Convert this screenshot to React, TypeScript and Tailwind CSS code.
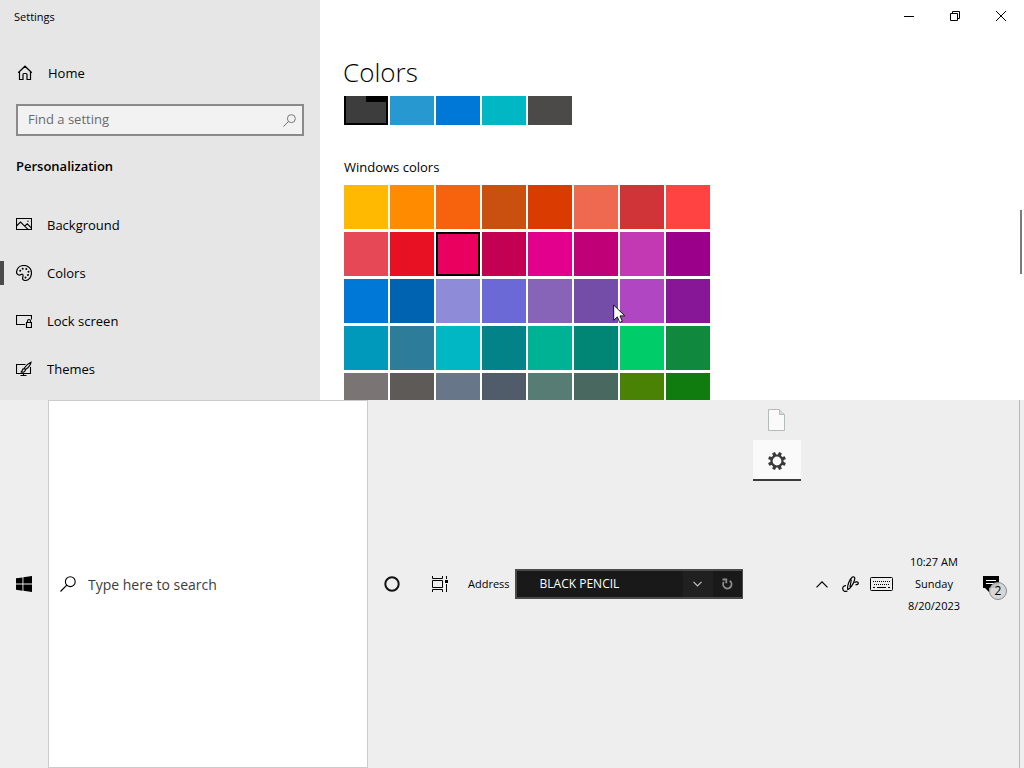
import type { ReactNode } from "react";

const recentColors = [
  { name: "Light blue", hex: "#2899d0" },
  { name: "Default blue", hex: "#0078d7" },
  { name: "Seafoam", hex: "#00b7c3" },
  { name: "Dark gray", hex: "#4c4a48" },
];

const windowsColors: string[] = [
  "#ffb900", "#ff8c00", "#f7630c", "#ca5010", "#da3b01", "#ef6950", "#d13438", "#ff4343",
  "#e74856", "#e81123", "#ea005e", "#c30052", "#e3008c", "#bf0077", "#c239b3", "#9a0089",
  "#0078d7", "#0063b1", "#8e8cd8", "#6b69d6", "#8764b8", "#744da9", "#b146c2", "#881798",
  "#0099bc", "#2d7d9a", "#00b7c3", "#038387", "#00b294", "#018574", "#00cc6a", "#10893e",
  "#7a7574", "#5d5a58", "#68768a", "#515c6b", "#567c73", "#486860", "#498205", "#107c10",
];

const selectedIndex = 10;
const pointerIndex = 21;

function Icon({ size = 16, children }: { size?: number; children: ReactNode }) {
  return (
    <svg width={size} height={size} viewBox="0 0 16 16" fill="none" stroke="currentColor" aria-hidden="true" className="shrink-0">
      {children}
    </svg>
  );
}

const HomeIcon = () => (
  <Icon>
    <path d="M1.200 7.800 8 1.200l6.800 6.600M2.500 6.800v7.700h3.500V9.500a1 1 0 0 1 1-1h2a1 1 0 0 1 1 1v5h3.500V6.800" strokeWidth="1.200" />
  </Icon>
);

const PictureIcon = () => (
  <Icon>
    <path d="M.5 1.500h15v11H.5zM1 8.500l3.500-3.500 7.500 7.300M8.800 9l2.500-2.200 3.900 4" strokeWidth="1.100" />
    <circle cx="12" cy="4.300" r=".7" fill="currentColor" stroke="none" />
  </Icon>
);

const PaletteIcon = () => (
  <Icon>
    <path
      d="M.6 6.400C1.400 2.900 4.400.5 8 .5c4.200 0 7.500 3.200 7.500 7.300 0 4.300-2.800 7.700-6.300 7.700-1.900 0-3-1.200-2.500-3 .4-1.300.9-2.800-.2-3.300-1.200-.5-1.500.9-2.900.9C1.500 10.100.2 8.300.6 6.400Z"
      strokeWidth="1.200"
    />
    <g fill="currentColor" stroke="none">
      <circle cx="4.200" cy="5.800" r="1" />
      <circle cx="6.700" cy="3.700" r="1" />
      <circle cx="10.300" cy="3.900" r="1" />
      <circle cx="12.500" cy="6.700" r="1" />
      <circle cx="12" cy="10" r="1" />
      <circle cx="9.500" cy="12.600" r="1" />
    </g>
  </Icon>
);

const LockScreenIcon = () => (
  <Icon>
    <path d="M9 11.500H.5v-9h15v4" strokeWidth="1.100" />
    <path d="M10.500 9.500h5v5h-5zM11.500 9.500V8a1.500 1.500 0 0 1 3 0v1.500" strokeWidth="1.200" />
  </Icon>
);

const ThemesIcon = () => (
  <Icon>
    <path d="M9.500 3.500H.5v9h14V6M7.500 12.500v2.500M4.500 14.500h6" strokeWidth="1.100" />
    <path d="M15 1.200c-2 .8-5.500 4-6.800 6.100l1.300 1.200c2.300-1.500 5.200-4.800 5.500-7.300ZM8.200 7.600c-1.500.1-2 .8-2 2-.1.800-.5 1.200-1.400 1.300 2 .8 4.300.2 4.700-2.300" strokeWidth="1.200" />
  </Icon>
);

const SearchIcon = ({ size }: { size: number }) => (
  <Icon size={size}>
    <circle cx="10.300" cy="5.700" r="4.900" strokeWidth="1.100" />
    <path d="M6.800 9.200.5 15.500" strokeWidth="1.200" />
  </Icon>
);

const navItems = [
  { label: "Background", icon: <PictureIcon /> },
  { label: "Colors", icon: <PaletteIcon />, active: true },
  { label: "Lock screen", icon: <LockScreenIcon /> },
  { label: "Themes", icon: <ThemesIcon /> },
];

function Sidebar() {
  return (
    <aside className="flex w-80 shrink-0 flex-col overflow-hidden bg-[#e6e6e6]">
      <div className="flex h-[33px] shrink-0 items-center pt-0.5 pl-3.5 text-[11px]">Settings</div>
      <a href="#home" className="mt-4 flex h-12 shrink-0 items-center gap-[15px] pl-[17px]">
        <HomeIcon />
        <span className="pt-0.5">Home</span>
      </a>
      <div className="mx-4 mt-[7px] flex h-8 shrink-0 items-center border-2 border-[#8a8a8a] bg-[#f2f2f2] px-1.5 pl-2.5 text-[#6a6a6a]">
        <input
          type="text"
          aria-label="Find a setting"
          placeholder="Find a setting"
          className="min-w-0 flex-1 bg-transparent outline-none placeholder:text-[#6a6a6a]"
        />
        <SearchIcon size={13} />
      </div>
      <h2 className="mt-5 h-5 shrink-0 pl-4 leading-5 font-semibold">Personalization</h2>
      <nav className="mt-[25px]">
        {navItems.map((item) => (
          <a key={item.label} href={`#${item.label}`} className="flex h-12 items-center">
            <span className={item.active ? "h-6 w-1 bg-[#4c4a48]" : "h-6 w-1"} />
            <span className="ml-3 mr-[15px] flex">{item.icon}</span>
            <span className="pt-0.5">{item.label}</span>
          </a>
        ))}
      </nav>
    </aside>
  );
}

function WindowButtons() {
  return (
    <div className="flex h-8 shrink-0 justify-end">
      <button aria-label="Minimize" className="flex w-[46px] items-center justify-center">
        <svg width="10" height="10" viewBox="0 0 10 10" stroke="black" aria-hidden="true">
          <path d="M0 5.500h10" />
        </svg>
      </button>
      <button aria-label="Restore" className="flex w-[46px] items-center justify-center">
        <svg width="10" height="10" viewBox="0 0 10 10" fill="none" stroke="black" aria-hidden="true">
          <path d="M.5 2.500h7v7h-7zM2.500 2.500v-2h7v7h-2" />
        </svg>
      </button>
      <button aria-label="Close" className="flex w-[46px] items-center justify-center">
        <svg width="10" height="10" viewBox="0 0 10 10" stroke="black" aria-hidden="true">
          <path d="M0 0l10 10M10 0 0 10" />
        </svg>
      </button>
    </div>
  );
}

function Pointer() {
  return (
    <svg width="13" height="20" viewBox="0 0 13 20" aria-hidden="true" className="absolute top-[25px] left-[39px] z-10">
      <path d="M.7 1v15.300l3.600-3.400 2.400 5.600 2.700-1.200-2.400-5.400h4.800Z" fill="white" stroke="#111" strokeWidth="1" />
    </svg>
  );
}

function ColorsPage() {
  return (
    <main className="flex min-w-0 flex-1 flex-col overflow-hidden bg-white">
      <WindowButtons />
      <div className="flex min-h-0 flex-1">
        <div className="min-w-0 flex-1 pl-6">
          <h1 className="-ml-px h-16 pt-5 text-[26px] leading-10 font-light">Colors</h1>
          <div className="flex h-[29px] gap-0.5">
            <button aria-label="Charcoal, selected" className="flex w-11 justify-end border-2 border-t-0 border-black bg-[#3d3d3d]">
              <span className="h-1.5 w-5 bg-black" />
            </button>
            {recentColors.map((color) => (
              <button key={color.name} aria-label={color.name} className="w-11" style={{ backgroundColor: color.hex }} />
            ))}
          </div>
          <h3 className="mt-8 h-5 leading-5">Windows colors</h3>
          <div className="mt-2 grid grid-cols-[repeat(8,44px)] gap-x-0.5 gap-y-[3px]">
            {windowsColors.map((hex, index) => (
              <button
                key={hex + index}
                aria-label={`Color ${hex}`}
                className={index === selectedIndex ? "relative h-11 border-2 border-black" : "relative h-11"}
                style={{ backgroundColor: hex }}
              >
                {index === pointerIndex && <Pointer />}
              </button>
            ))}
          </div>
        </div>
        <div className="mt-[178px] mr-0.5 h-16 w-0.5 bg-[#7a7a7a]" />
      </div>
    </main>
  );
}

function StartIcon() {
  return (
    <svg width="16" height="16" viewBox="0 0 16 16" aria-hidden="true">
      <path d="M0 2.300 6.500 1.400v6.200H0zM7.400 1.300 16 0v7.600H7.400zM0 8.500h6.500v6.200L0 13.800zM7.400 8.500H16V16l-8.600-1.200z" />
    </svg>
  );
}

function TaskViewIcon() {
  return (
    <svg width="16" height="16" viewBox="0 0 16 16" fill="none" stroke="black" aria-hidden="true">
      <path d="M.5 0v2.500h10V0M.5 16v-2.500h10V16M.5 4.500h10v7H.5zM14.500 0v3M14.500 8v8" />
      <path d="M13 4h3v3h-3z" fill="black" stroke="none" />
    </svg>
  );
}

function AddressBar() {
  return (
    <div className="flex items-center">
      <label htmlFor="address" className="mr-[5px] text-[11px]">
        Address
      </label>
      <div className="flex h-[30px] w-[228px] border-2 border-r border-[#4a4a4a] bg-[#191919] text-white">
        <input
          id="address"
          type="text"
          defaultValue="BLACK PENCIL"
          className="min-w-0 flex-1 bg-transparent pl-[23px] text-[12px] outline-none"
        />
        <button aria-label="Show address history" className="flex w-[30px] items-center justify-center bg-[#202020]">
          <svg width="9" height="6" viewBox="0 0 9 6" fill="none" stroke="#c0c0c0" aria-hidden="true">
            <path d="m.5.8 4 4 4-4" strokeWidth="1.200" />
          </svg>
        </button>
        <button aria-label="Refresh" className="flex w-[29px] items-center justify-center">
          <svg width="12" height="12" viewBox="0 0 12 12" fill="none" stroke="#8c8c8c" aria-hidden="true">
            <path d="M8.700 2.800A4.200 4.200 0 1 1 2.800 4" strokeWidth="1.900" />
            <path d="M1.500 1.500h3.800v3.800" strokeWidth="1.800" />
          </svg>
        </button>
      </div>
    </div>
  );
}

function GearIcon() {
  return (
    <svg width="20" height="20" viewBox="0 0 20 20" aria-hidden="true">
      <g fill="#3a3a3a">
        {[22.5, 67.5, 112.5, 157.5, 202.5, 247.5, 292.5, 337.5].map((angle) => (
          <path key={angle} d="M8.200 4.500 8.500 1h3l.3 3.500z" transform={`rotate(${angle} 10 10)`} />
        ))}
      </g>
      <circle cx="10" cy="10" r="5.500" fill="none" stroke="#3a3a3a" strokeWidth="2.200" />
    </svg>
  );
}

function RunningApps() {
  return (
    <div className="ml-2.5 flex w-12 flex-col self-start">
      <button aria-label="Document" className="flex h-10 items-center justify-center">
        <svg width="17" height="22" viewBox="0 0 17 22" fill="#fafafa" stroke="#b4bbb9" aria-hidden="true">
          <path d="M.5.5h11l5 5v16H.5z" />
          <path d="M11.500.5v5h5" fill="#d8dcdb" />
        </svg>
      </button>
      <button aria-label="Settings" className="flex h-[41px] items-center justify-center border-b-2 border-[#3a3a3a] bg-[#fafafa] pt-0.5">
        <GearIcon />
      </button>
    </div>
  );
}

function KeyboardIcon() {
  return (
    <svg width="23" height="14" viewBox="0 0 23 14" fill="none" stroke="black" aria-hidden="true">
      <rect x=".5" y=".5" width="22" height="13" rx="1" />
      <path d="M3 4.500h17M4 7.500h15" strokeDasharray="1 1" />
      <path d="M3 10.500h2M7 10.500h9M18 10.500h2" />
    </svg>
  );
}

function PenIcon() {
  return (
    <svg width="17" height="17" viewBox="0 0 17 17" fill="none" stroke="black" strokeWidth="1.200" aria-hidden="true">
      <path d="M5.800 13.500c-.9-3.600 1.700-10.200 4.600-12.500.9-.6 2.600.2 2.400 1.400-.4 3.400-2.900 7.600-5.300 10.200ZM9.300 3.500 8 11" />
      <path d="M4 9.700C2 9.500.6 10.800.7 12.600c.1 2.500 2.700 3.600 4.600 2.300M12.400 6.400c1.500-1 3.700-.6 3.900.7.2 1.100-1.300 1.700-2.800 1.600" />
    </svg>
  );
}

function NotificationIcon() {
  return (
    <svg width="16" height="16" viewBox="0 0 16 16" aria-hidden="true">
      <path d="M0 0h16v12H6v4l-4-4H0z" />
      <path d="M3 4.500h10M3 7.500h10" stroke="white" />
    </svg>
  );
}

function Taskbar() {
  return (
    <footer className="flex min-h-0 items-stretch bg-[#eeeeee] text-[11px]">
      <button aria-label="Start" className="flex w-12 shrink-0 items-center justify-center">
        <StartIcon />
      </button>
      <label className="flex w-80 shrink-0 items-center gap-3 border border-[#cccccc] bg-white pl-[11px]">
        <SearchIcon size={16} />
        <input
          type="text"
          aria-label="Type here to search"
          placeholder="Type here to search"
          className="min-w-0 flex-1 bg-transparent pt-0.5 text-sm outline-none placeholder:text-[#3c3c3c]"
        />
      </label>
      <button aria-label="Cortana" className="flex w-12 items-center justify-center">
        <svg width="16" height="16" viewBox="0 0 16 16" fill="none" stroke="#111" strokeWidth="2" aria-hidden="true">
          <circle cx="8" cy="8" r="6.700" />
        </svg>
      </button>
      <button aria-label="Task View" className="mr-1 flex w-12 items-center justify-center">
        <TaskViewIcon />
      </button>
      <AddressBar />
      <RunningApps />
      <div className="ml-auto flex items-center">
        <button aria-label="Show hidden icons" className="flex h-10 w-7 items-center justify-center">
          <svg width="12" height="7" viewBox="0 0 12 7" fill="none" stroke="black" aria-hidden="true">
            <path d="m.5 6.300 5.500-5.500 5.500 5.500" strokeWidth="1.200" />
          </svg>
        </button>
        <button aria-label="Windows Ink Workspace" className="flex h-10 w-7 items-center justify-center">
          <PenIcon />
        </button>
        <button aria-label="Touch keyboard" className="flex h-10 w-[34px] items-center justify-center">
          <KeyboardIcon />
        </button>
        <button className="flex w-[70px] flex-col items-center pl-0.5 leading-[22px]">
          <span>10:27 AM</span>
          <span>Sunday</span>
          <span>8/20/2023</span>
        </button>
        <button aria-label="2 new notifications" className="flex h-10 w-[46px] items-center justify-center">
          <span className="relative">
            <NotificationIcon />
            <span className="absolute top-1.5 left-1.5 flex size-[18px] items-center justify-center rounded-full border border-[#8a8a8a] bg-[#d4d4d4]/90 text-[12px] leading-none">
              2
            </span>
          </span>
        </button>
      </div>
      <button aria-label="Show desktop" className="ml-[5px] w-[5px] border-l border-[#b8b8b8]" />
    </footer>
  );
}

export default function App() {
  return (
    <div className="grid h-screen grid-rows-[25fr_23fr] font-['Open_Sans','Noto_Sans',sans-serif] text-[13px] text-black">
      <div className="flex min-h-0 overflow-hidden">
        <Sidebar />
        <ColorsPage />
      </div>
      <Taskbar />
    </div>
  );
}
